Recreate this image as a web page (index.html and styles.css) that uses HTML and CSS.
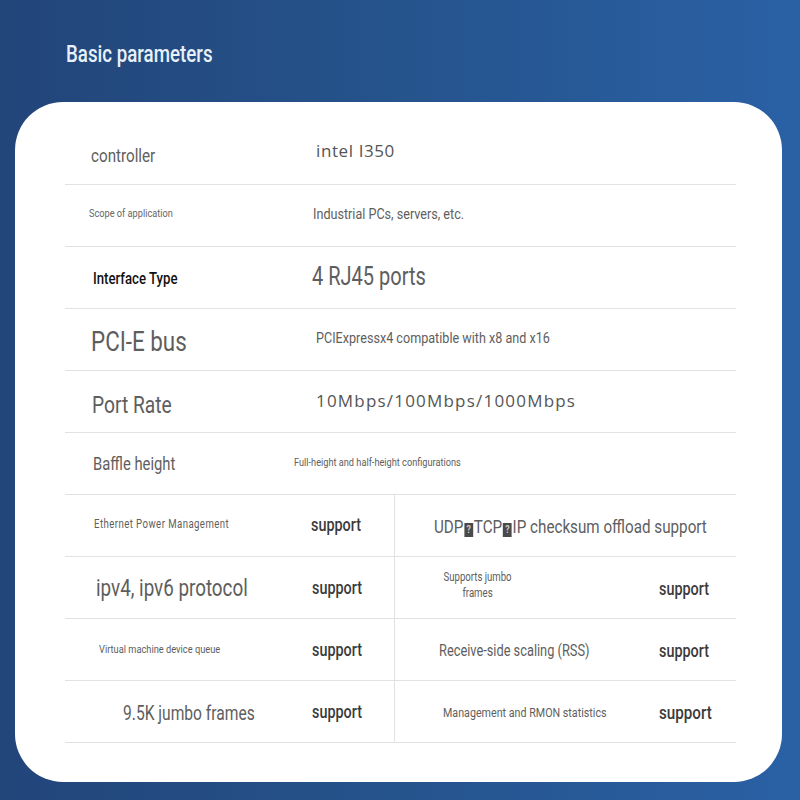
FILE: index.html
```html
<!DOCTYPE html>
<html lang="en">
<head>
<meta charset="utf-8">
<title>Basic parameters</title>
<link rel="stylesheet" href="styles.css">
</head>
<body>
<div class="page">
  <header class="head">
    <h1 class="title"><span class="t">Basic parameters</span></h1>
  </header>
  <section class="card">
    <div class="table">
      <div class="row">
        <div class="lab lab-ctrl"><span class="t">controller</span></div>
        <div class="val val-intel">intel I350</div>
      </div>
      <div class="row">
        <div class="lab lab-scope"><span class="t">Scope of application</span></div>
        <div class="val val-scope"><span class="t tw">Industrial PCs, servers, etc.</span></div>
      </div>
      <div class="row">
        <div class="lab lab-iface"><span class="t">Interface Type</span></div>
        <div class="val val-ports"><span class="t">4 RJ45 ports</span></div>
      </div>
      <div class="row">
        <div class="lab lab-pcie"><span class="t">PCI-E bus</span></div>
        <div class="val val-pcie"><span class="t tw">PCIExpressx4 compatible with x8 and x16</span></div>
      </div>
      <div class="row">
        <div class="lab lab-rate"><span class="t">Port Rate</span></div>
        <div class="val val-rate">10Mbps/100Mbps/1000Mbps</div>
      </div>
      <div class="row">
        <div class="lab lab-baffle"><span class="t">Baffle height</span></div>
        <div class="val val-baffle"><span class="t">Full-height and half-height configurations</span></div>
      </div>
      <div class="row split">
        <div class="half half-l">
          <div class="sl sl-eth"><span class="t">Ethernet Power Management</span></div>
          <div class="sup sup-1"><span class="t">support</span></div>
        </div>
        <div class="half half-r">
          <div class="sr sr-udp"><span class="t">UDP<span class="miss">?</span>TCP<span class="miss">?</span>IP checksum offload support</span></div>
        </div>
      </div>
      <div class="row split">
        <div class="half half-l">
          <div class="sl sl-ip"><span class="t">ipv4, ipv6 protocol</span></div>
          <div class="sup sup-2"><span class="t">support</span></div>
        </div>
        <div class="half half-r">
          <div class="sr sr-jumbo"><span class="t tc">Supports jumbo<br>frames</span></div>
          <div class="sup sup-r"><span class="t">support</span></div>
        </div>
      </div>
      <div class="row split">
        <div class="half half-l">
          <div class="sl sl-vm"><span class="t">Virtual machine device queue</span></div>
          <div class="sup sup-2"><span class="t">support</span></div>
        </div>
        <div class="half half-r">
          <div class="sr sr-rss"><span class="t">Receive-side scaling (RSS)</span></div>
          <div class="sup sup-r"><span class="t">support</span></div>
        </div>
      </div>
      <div class="row split">
        <div class="half half-l">
          <div class="sl sl-95k"><span class="t">9.5K jumbo frames</span></div>
          <div class="sup sup-2"><span class="t">support</span></div>
        </div>
        <div class="half half-r">
          <div class="sr sr-rmon"><span class="t">Management and RMON statistics</span></div>
          <div class="sup sup-r sup-big"><span class="t">support</span></div>
        </div>
      </div>
    </div>
  </section>
</div>
</body>
</html>
```

FILE: styles.css
```css
* { box-sizing: border-box; }
html, body { margin: 0; padding: 0; }
body {
  font-family: Roboto, "Liberation Sans", sans-serif;
}
.t {
  display: inline-block;
  white-space: nowrap;
  transform: scaleX(0.8);
  transform-origin: 0 50%;
}
.tw { transform: scaleX(0.84); }
.tc {
  text-align: center;
  transform-origin: 50% 50%;
}
.page {
  width: 800px;
  height: 800px;
  background: linear-gradient(90deg, #22457a 0%, #25528a 45%, #2a61a5 100%);
  overflow: hidden;
}
.head {
  height: 102px;
  padding: 39px 0 0 66px;
}
.title {
  margin: 0;
  font-size: 23.4px;
  line-height: 30px;
  font-weight: 500;
  color: #e8f0f8;
}
.card {
  margin-left: 15px;
  width: 767px;
  height: 680px;
  background: #fff;
  border-radius: 48px;
  padding: 21px 0 0 50px;
}
.table { width: 671px; }
.row {
  display: flex;
  align-items: center;
  height: 62px;
  border-bottom: 1px solid #e2e2e2;
  color: #5e5e5e;
}
.lab { width: 247px; flex: none; }
.lab-ctrl { padding: 3px 0 0 26px; font-size: 19px; }
.lab-scope { padding: 0 0 5px 24px; font-size: 11.5px; color: #666; }
.lab-iface { padding: 1px 0 0 28px; font-size: 16.5px; font-weight: 500; color: #111; }
.lab-pcie { padding: 3px 0 0 26px; font-size: 28px; }
.lab-rate { padding: 6px 0 0 27px; font-size: 24px; }
.lab-baffle { padding: 1px 0 0 28px; font-size: 18.5px; }

.val-intel { padding: 0 0 7px 4px; font-family: "Open Sans", sans-serif; font-size: 17px; letter-spacing: 0.6px; color: #555; }
.val-scope { padding: 0 0 3px 1px; font-size: 15px; }
.val-ports { padding: 0 0 3px 0; font-size: 25px; }
.val-pcie { padding: 0 0 3px 4px; font-size: 15px; }
.val-rate { padding: 0 0 3px 4px; font-family: "Open Sans", sans-serif; font-size: 17px; letter-spacing: 1.2px; color: #555; }
.val-baffle { margin-left: -18px; padding: 0 0 3px 0; font-size: 11.5px; }

.split { align-items: stretch; }
.half { display: flex; align-items: center; }
.half-l { width: 330px; flex: none; border-right: 1px solid #e2e2e2; }
.half-r { flex: 1; }
.sl { width: 246px; flex: none; }
.sl-eth { padding: 0 0 3px 29px; font-size: 12px; letter-spacing: 0.55px; }
.sl-ip { padding: 1px 0 0 31px; font-size: 23.5px; }
.sl-vm { padding: 0 0 1px 34px; font-size: 11.6px; }
.sl-95k { padding: 4px 0 0 58px; font-size: 19.5px; }
.sup { font-size: 18px; font-weight: 500; color: #3a3a3a; }
.sup-1 { padding: 0 0 3px 0; }
.sup-2 { padding: 0 0 1px 1px; }
.sup-big { font-size: 19px; }
.sr { width: 264px; flex: none; }
.sr-udp { width: auto; padding: 1px 0 0 39px; font-size: 19px; }
.miss {
  display: inline-block;
  width: 11px;
  height: 14px;
  line-height: 14px;
  margin: 0 1px;
  background: #4a4a4a;
  color: #ccc;
  font-size: 11px;
  font-weight: bold;
  text-align: center;
  vertical-align: 0;
}
.sr-jumbo { padding: 0 0 5px 40px; width: 264px; font-size: 12px; line-height: 16px; }
.sr-rss { padding: 1px 0 0 44px; font-size: 16px; }
.sr-rmon { padding: 1px 0 0 48px; font-size: 13.4px; }
.sup-r { padding-top: 1px; }
```
